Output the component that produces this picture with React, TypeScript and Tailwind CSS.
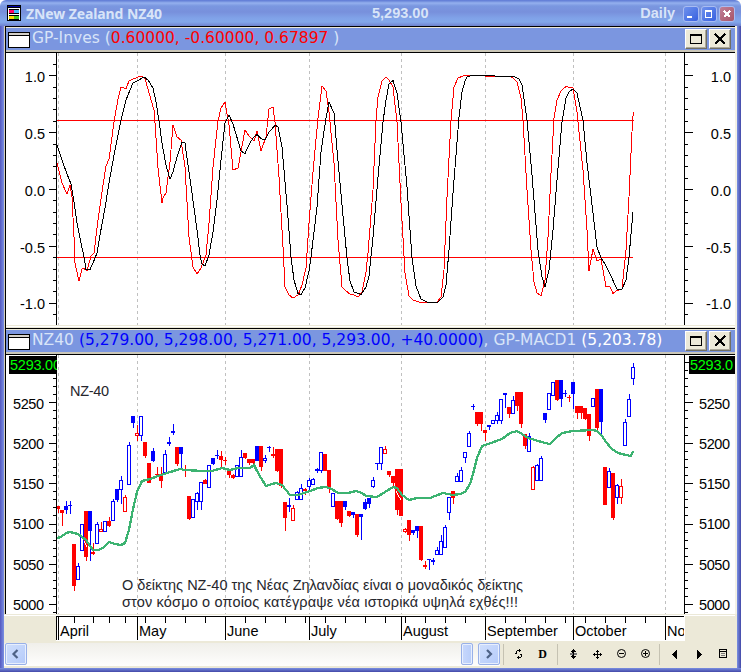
import React from "react";

type Candle = [number, number, number, number, number, string];

// x centre, high, low, body top, body bottom, kind (upper case = filled, lower case = hollow)
const candles: Candle[] = [
  [58, 506, 513, 506, 509, "R"], [62, 510, 526, 510, 513, "R"], [66, 501, 514, 506, 510, "B"], [70, 501, 514, 505, 506, "B"],
  [74, 544, 591, 544, 586, "R"], [78, 563, 580, 566, 580, "b"], [82, 524, 551, 524, 551, "b"], [86, 511, 561, 511, 557, "R"],
  [90, 511, 561, 511, 531, "B"], [93, 543, 555, 552, 554, "R"], [97, 522, 544, 524, 544, "b"], [101, 522, 532, 529, 532, "r"],
  [105, 521, 532, 521, 532, "b"], [109, 517, 527, 521, 526, "R"], [113, 499, 521, 501, 521, "b"], [117, 489, 502, 489, 500, "B"],
  [121, 476, 504, 480, 490, "b"], [125, 495, 512, 497, 512, "r"], [129, 442, 485, 445, 485, "b"], [133, 416, 428, 416, 423, "B"],
  [137, 425, 441, 433, 436, "r"], [141, 416, 441, 416, 436, "b"], [145, 442, 458, 442, 456, "R"], [149, 463, 483, 463, 483, "R"],
  [153, 448, 462, 451, 461, "B"], [157, 467, 476, 474, 475, "R"], [161, 467, 488, 474, 481, "R"], [165, 450, 473, 454, 473, "b"],
  [169, 437, 446, 442, 444, "B"], [173, 424, 435, 431, 433, "B"], [177, 447, 466, 447, 464, "R"], [181, 447, 468, 447, 454, "B"],
  [185, 465, 477, 470, 471, "R"], [189, 496, 520, 496, 519, "R"], [193, 499, 518, 499, 518, "b"], [197, 492, 510, 493, 502, "b"],
  [201, 482, 510, 482, 502, "b"], [205, 479, 484, 480, 484, "R"], [209, 465, 488, 465, 488, "b"], [213, 458, 465, 458, 464, "B"],
  [217, 450, 459, 455, 456, "B"], [221, 451, 467, 456, 460, "R"], [225, 457, 465, 460, 461, "R"], [229, 471, 478, 471, 475, "R"],
  [233, 474, 479, 475, 478, "R"], [237, 465, 477, 465, 477, "b"], [241, 450, 477, 457, 477, "b"], [245, 453, 459, 453, 458, "R"],
  [249, 459, 465, 459, 463, "R"], [253, 459, 464, 459, 463, "R"], [257, 446, 461, 446, 461, "B"], [261, 446, 471, 446, 467, "R"],
  [265, 455, 463, 458, 461, "b"], [269, 446, 452, 447, 448, "B"], [273, 447, 458, 454, 456, "R"], [277, 449, 472, 449, 471, "R"],
  [281, 449, 488, 449, 486, "R"], [285, 502, 531, 502, 518, "R"], [289, 498, 512, 505, 507, "B"], [293, 505, 521, 508, 521, "r"],
  [297, 491, 500, 492, 500, "b"], [301, 484, 500, 488, 500, "b"], [305, 488, 495, 489, 491, "R"], [309, 478, 490, 480, 487, "b"],
  [313, 478, 485, 479, 485, "b"], [317, 468, 473, 469, 471, "B"], [321, 452, 473, 452, 471, "b"], [325, 454, 471, 454, 471, "R"],
  [329, 470, 493, 470, 488, "R"], [333, 493, 507, 493, 507, "b"], [337, 501, 520, 501, 519, "R"], [341, 501, 527, 501, 523, "R"],
  [345, 501, 510, 501, 507, "B"], [349, 511, 517, 511, 516, "R"], [353, 512, 518, 512, 515, "B"], [357, 514, 537, 514, 535, "R"],
  [361, 514, 540, 514, 517, "B"], [365, 499, 510, 502, 509, "B"], [369, 498, 508, 498, 504, "B"], [373, 477, 488, 480, 487, "b"],
  [377, 463, 470, 463, 464, "B"], [381, 447, 470, 447, 464, "b"], [385, 446, 454, 449, 454, "r"], [389, 471, 477, 471, 475, "R"],
  [393, 476, 486, 476, 483, "R"], [397, 469, 515, 469, 510, "R"], [401, 469, 516, 469, 516, "R"], [405, 528, 533, 529, 532, "r"],
  [409, 520, 541, 520, 535, "R"], [413, 530, 535, 530, 533, "B"], [417, 526, 538, 526, 531, "B"], [421, 526, 561, 526, 560, "R"],
  [425, 561, 569, 565, 567, "R"], [429, 559, 570, 559, 560, "B"], [433, 558, 565, 560, 562, "B"], [437, 547, 555, 550, 555, "b"],
  [441, 535, 555, 541, 555, "b"], [445, 525, 548, 527, 548, "b"], [449, 497, 520, 497, 513, "b"], [453, 491, 504, 491, 498, "R"],
  [457, 473, 482, 476, 482, "b"], [461, 467, 482, 470, 482, "b"], [465, 452, 463, 452, 458, "b"], [469, 431, 447, 433, 447, "b"],
  [473, 404, 410, 406, 407, "B"], [477, 412, 426, 412, 424, "R"], [481, 412, 431, 412, 424, "R"], [485, 430, 441, 430, 433, "R"],
  [489, 425, 430, 425, 427, "B"], [493, 420, 424, 420, 424, "b"], [497, 412, 424, 415, 421, "b"], [501, 399, 424, 399, 421, "b"],
  [505, 393, 408, 393, 395, "B"], [509, 407, 418, 407, 414, "R"], [513, 396, 414, 400, 414, "b"], [517, 392, 411, 392, 406, "R"],
  [521, 392, 428, 392, 424, "R"], [525, 434, 449, 434, 446, "R"], [529, 433, 452, 436, 452, "b"], [533, 466, 490, 467, 490, "r"],
  [537, 464, 481, 465, 481, "b"], [541, 456, 481, 458, 481, "b"], [545, 413, 423, 413, 420, "B"], [549, 393, 410, 393, 410, "b"],
  [553, 382, 396, 382, 396, "b"], [557, 380, 401, 380, 400, "R"], [561, 380, 407, 380, 399, "B"], [565, 390, 397, 393, 394, "B"],
  [569, 395, 402, 397, 398, "R"], [573, 382, 409, 382, 394, "B"], [577, 406, 419, 406, 413, "R"], [581, 406, 419, 406, 413, "R"],
  [585, 408, 420, 408, 419, "R"], [589, 414, 441, 414, 436, "R"], [593, 398, 407, 398, 407, "b"], [597, 389, 430, 389, 428, "R"],
  [601, 389, 434, 389, 422, "B"], [605, 467, 505, 467, 505, "R"], [609, 468, 488, 471, 488, "b"], [613, 473, 520, 473, 518, "R"],
  [617, 484, 504, 485, 498, "b"], [621, 479, 504, 486, 498, "r"], [625, 419, 446, 422, 446, "b"], [629, 394, 417, 399, 417, "b"],
  [633, 363, 385, 367, 379, "b"],
];

const average =
  "57,538 61,537 66,533 70,532 78,534 86,540 90,546 93,550 99,550 104,547 109,542 115,544 121,545 125,543 129,530 133,509 137,492 142,481 150,479 158,476 167,473 180,469 185,470 203,471 212,471 222,468 230,470 238,468 250,468 254,465 257,471 261,478 266,486 272,484 276,483 282,485 290,495 298,495 310,491 318,488 325,487 330,488 338,493 348,493 356,491 362,493 366,496 377,497 385,492 393,487 397,488 402,495 409,500 417,498 430,498 443,493 453,495 460,494 465,492 470,484 473,474 477,458 482,446 488,444 502,439 510,433 517,431 522,434 528,438 535,440 545,443 550,444 555,439 562,433 573,431 593,430 597,431 602,436 606,442 612,449 618,453 626,455 631,456 633,451";

const signalLine =
  "57,145 60,154 63,163 67,174 71,184 74,202 77,223 81,243 84,257 86,269.5 90,269.5 93,263 97,253 100,235 105,208 109,183 115,150 121,120 126,100 130,90 133,83 138,80.5 144,77 148,80 153,88 156,102 159,121 162,143 166,165 170,179 173,172 177,157 182,142 185,143 187,158 192,193 197,230 200,255 202,264 205,266 209,255 213,232 217,200 221,160 225,123 229,115 233,124 241,151 245,153.5 250,143 253,138 257,134.5 261,138.5 265,140 269,132 275,125.5 278,126.5 282,147 287,205 291,257 294,280 298,293.5 301,294.5 305,288 309,271 311,257 317,207 321,152 326,118 329,102 334,113 337,150 342,205 347,258 350,281 354,292 361,294.5 366,287 369,276 373,237 378,177 383,122 386,100 389,84 393,80.5 397,93 401,122 407,187 412,258 416,286 421,299 427,302 438,302 443,297 446,285 449,250 453,193 459,117 462,92 465,81 467,77 471,75.5 491,75.5 502,77 507,76.5 515,77 519,79 522,85 527,120 532,175 538,250 542,277 545,287 549,270 553,230 557,180 562,122 566,98 569,92 573,89 577,93 583,120 587,163 593,213 597,247 601,258 605,264 610,274 617,289 622,289 626,280 629,257 633,212";

const fastLine =
  "57,163 62,183 67,194 70,185 72,197 74,237 75,263 79,281 82,269 84,268.5 87,271 91,256 94,253 98,220 102,192 106,166 109,159 114,122 118,99 121,87 126,88.5 129,81 133,79 141,76 145,78.5 149,93 154,110 155,123 158,168 162,203 163,198 166,193 170,162 173,125 177,137 181,140 185,167 189,237 193,267 197,274 201,268 206,255 209,223 213,167 218,121 221,108 225,102 229,125 233,170 238,168 241,152 245,130 249,136 254,141 257,131 261,151 266,137 269,109 273,107 275,122 279,177 283,247 285,287 289,295 293,298 298,295 302,285 306,268 309,223 313,172 318,118 322,86 326,91 329,112 334,163 338,240 342,287 346,291 350,294 354,295 358,297 362,292 366,272 368,253 373,190 376,120 378,97 382,81 386,77 389,80 393,87 397,122 401,203 405,273 409,296 413,300 421,302.5 437,302 441,297 444,270 447,197 451,120 454,87 458,78 463,76 470,75.5 484,75.5 487,76.5 498,77 510,76.5 513,78 517,82 521,98 523,120 527,190 531,250 534,282 537,293 541,295.5 545,280 548,237 551,173 554,118 557,100 561,91 566,86.5 573,88 577,112 583,170 587,230 589,271 593,249 597,261 601,259 606,286.5 610,287 613,293.5 617,290.5 622,289 626,250 629,197 632.5,121 633.5,112";

const months: [number, string][] = [
  [58, "April"], [137, "May"], [225, "June"], [309, "July"], [401, "August"], [485, "September"], [573, "October"], [665, "No"],
];

const weekTicks = [74, 93, 109, 125, 145, 165, 185, 205, 245, 265, 285, 305, 325, 345, 365, 385, 405, 425, 445, 465, 505, 525, 545, 565, 585, 605, 625, 645];

function GridLines({ top, bottom }: { top: number; bottom: number }) {
  return (
    <g stroke="#c0c0c0" strokeDasharray="3 3">
      {months.map(([x]) => (
        <line key={x} x1={x + 0.5} x2={x + 0.5} y1={top} y2={bottom} />
      ))}
    </g>
  );
}

function Axes({ top, bottom, zero, step, from, to }: { top: number; bottom: number; zero: number; step: number; from: number; to: number }) {
  const ticks: number[] = [];
  for (let i = from; i <= to; i++) ticks.push(i);
  return (
    <g fill="#000">
      <rect x={56} y={top} width={1} height={bottom - top} />
      <rect x={684} y={top} width={1} height={bottom - top} />
      {ticks.map((i) => {
        const y = Math.round(zero - i * step);
        const major = i % 5 === 0;
        return (
          <g key={i}>
            <rect x={major ? 49 : 53} y={y} width={major ? 7 : 3} height={1} />
            <rect x={685} y={y} width={major ? 8 : 3} height={1} />
          </g>
        );
      })}
    </g>
  );
}

function Oscillator() {
  const labels: [string, number][] = [["1.0", 82], ["0.5", 139], ["0.0", 196], ["-0.5", 253], ["-1.0", 309]];
  return (
    <svg className="block h-[272px] w-[729px] bg-white" viewBox="6 53 729 272" shapeRendering="crispEdges">
      <GridLines top={53} bottom={325} />
      <Axes top={53} bottom={325} zero={189} step={11.37} from={-11} to={11} />
      <g fill="#f00">
        <rect x={57} y={120} width={577} height={1} />
        <rect x={57} y={257} width={576} height={1} />
      </g>
      <polyline points={fastLine} fill="none" stroke="#f00" />
      <polyline points={signalLine} fill="none" stroke="#000" />
      <g className="font-['Liberation_Sans',Arial,sans-serif] text-[14.5px]" textAnchor="end">
        {labels.map(([t, y]) => (
          <React.Fragment key={t}>
            <text x={45} y={y}>{t}</text>
            <text x={731} y={y}>{t}</text>
          </React.Fragment>
        ))}
      </g>
    </svg>
  );
}

function CandleMark({ c }: { c: Candle }) {
  const [x, high, low, top, bottom, kind] = c;
  const colour = kind.toLowerCase() === "r" ? "#f00" : "#00f";
  const hollow = kind === "r" || kind === "b";
  return (
    <g fill={colour}>
      <rect x={x} y={high} width={1} height={low - high} />
      <rect x={x - 2} y={top} width={4} height={bottom - top} />
      {hollow && <rect x={x - 1} y={top + 1} width={2} height={Math.max(1, bottom - top - 2)} fill="#fff" />}
    </g>
  );
}

function PriceChart() {
  const labels: [string, number][] = [["5250", 409], ["5200", 449], ["5150", 489], ["5100", 529], ["5050", 570], ["5000", 610]];
  return (
    <svg className="block h-[259px] w-[729px] bg-white" viewBox="6 355 729 259" shapeRendering="crispEdges">
      <GridLines top={355} bottom={614} />
      <Axes top={355} bottom={614} zero={604.3} step={8.08} from={-1} to={30} />
      <clipPath id="plot"><rect x={57} y={355} width={627} height={259} /></clipPath>
      <g clipPath="url(#plot)">
        {candles.map((c) => <CandleMark key={c[0]} c={c} />)}
        <path d="M396 491l2 4M398 495l3 5M84 541l3 6" stroke="#fff" />
        <polyline points={average} fill="none" stroke="#3cb371" strokeWidth={2.3} />
      </g>
      <rect x={9} y={356} width={48} height={18} />
      <rect x={689} y={356} width={46} height={18} />
      <g className="font-['Liberation_Sans',Arial,sans-serif] text-[14.5px]">
        {labels.map(([t, y]) => (
          <React.Fragment key={t}>
            <text x={13} y={y} textLength={31}>{t}</text>
            <text x={699} y={y} textLength={31}>{t}</text>
          </React.Fragment>
        ))}
        <svg x={9} y={356} width={48} height={18}><text x={1} y={14} fill="#0f0" textLength={51}>5293.00</text></svg>
        <text x={690} y={370} fill="#0f0" textLength={43}>5293.0</text>
        <g fill="#26262c">
          <text x={70} y={396} textLength={39}>NZ-40</text>
          <text x={122} y={590} textLength={401}>Ο δείκτης NZ-40 της Νέας Ζηλανδίας είναι ο μοναδικός δείκτης</text>
          <text x={122} y={607} textLength={396}>στον κόσμο ο οποίος κατέγραψε νέα ιστορικά υψηλά εχθές!!!</text>
        </g>
      </g>
    </svg>
  );
}

function DateAxis() {
  return (
    <div className="h-[27px] bg-[#ece9d8]">
      <svg className="block h-[27px] w-[731px]" viewBox="4 614 731 27" shapeRendering="crispEdges">
        <rect x={4} y={614} width={731} height={1} fill="#ece9d8" />
        <rect x={4} y={615} width={731} height={1} fill="#fff" />
        <rect x={56} y={616} width={629} height={25} fill="#fff" />
        <rect x={56} y={616} width={628} height={1} />
        <rect x={56} y={616} width={1} height={24} />
        {weekTicks.map((x) => <rect key={x} x={x} y={617} width={1} height={6} />)}
        <svg x={57} y={616} width={627} height={25} viewBox="57 616 627 25">
          {months.map(([x, name]) => (
            <g key={name}>
              <rect x={x} y={616} width={1} height={24} />
              <text x={x + 2} y={636} className="font-['Liberation_Sans',Arial,sans-serif] text-[14.5px]">{name}</text>
            </g>
          ))}
        </svg>
      </svg>
    </div>
  );
}

function PanelButton({ children }: { children: React.ReactNode }) {
  return (
    <span className="block h-[20px] w-[22px] border border-b-[#716f64] border-l-white border-r-[#716f64] border-t-white bg-[#ece9d8] shadow-[inset_-1px_-1px_0_#aca899]">
      <svg className="block h-[18px] w-[20px]" viewBox="0 0 20 18" shapeRendering="crispEdges">{children}</svg>
    </span>
  );
}

function PanelHeader({ children }: { children: React.ReactNode }) {
  return (
    <div className="h-[27px] shrink-0 border-y border-black">
      <div className="flex h-[25px] items-center border-b-2 border-t border-b-[#cbc7b8] border-t-[#ece9d8] bg-[#7b96e0] pl-0.5 pr-1">
        <span className="mt-0.5 block h-4 w-[22px] shrink-0 border border-black bg-white">
          <span className="block h-[3px] border-b border-black bg-[#d4d0c8]" />
        </span>
        <div className="-mt-0.5 ml-0.5 grow whitespace-pre font-['DejaVu_Sans',Verdana,sans-serif] text-[15.5px] leading-[22px] text-[#d8e4f8]">{children}</div>
        <div className="flex gap-0.5">
          <PanelButton>
            <path d="M4.500 5v8.500h10.500V5z" fill="none" stroke="#000" />
            <path d="M4 4h12v2H4z" />
          </PanelButton>
          <PanelButton>
            <path d="M5 4l10 10M15 4L5 14" stroke="#000" strokeWidth="2" />
          </PanelButton>
        </div>
      </div>
    </div>
  );
}

function CaptionButton({ kind }: { kind: "min" | "max" | "close" }) {
  const colour = kind === "close" ? "bg-linear-to-br from-[#c08098] to-[#a85468]" : "bg-linear-to-br from-[#6f91ec] to-[#3860e0]";
  return (
    <span className={`block h-4 w-4 rounded-[3px] border border-[#a9bcf2] ${colour}`}>
      <svg className="block h-3.5 w-3.5" viewBox="0 0 14 14" fill="none" stroke="#fff" shapeRendering="crispEdges">
        {kind === "min" && <path d="M3 10h5" strokeWidth="2" />}
        {kind === "max" && <path d="M3.500 4v6.500h6V4M3 4h7" strokeWidth="1.500" />}
        {kind === "close" && <path d="M4 4l6 6M10 4l-6 6" strokeWidth="2" />}
      </svg>
    </span>
  );
}

function TitleBar() {
  return (
    <div className="flex h-[26px] shrink-0 items-center rounded-t-[6px] bg-[linear-gradient(#5f7ad6_0,#6c88da_1px,#94b0ee_3px,#7a97e0_6px,#7890dc_12px,#80a2e8_18px,#82a8ea_22px,#7a94de_24px,#6d82cc_26px)] pl-[7px] pr-1.5 text-[#d8e4f8]">
      <svg className="h-4 w-4" viewBox="0 0 16 16" shapeRendering="crispEdges">
        <path d="M0 0h14v16H0z" />
        <path d="M1 1h12v1H1z" fill="#00a" />
        <path d="M1 3h12v12H1z" fill="#fff" />
        <path d="M2 4h10v5H2zM2 10h10v5H2z" />
        <path d="M2 5h5v3H2z" fill="#f06" /><path d="M7 5h5v3H7z" fill="#4bf" />
        <path d="M2 11h5v3H2z" fill="#fd0" /><path d="M7 11h5v3H7z" fill="#4c2" />
      </svg>
      <div className="ml-[3px] mt-px w-[346px] whitespace-nowrap font-['Noto_Sans',Verdana,sans-serif] text-[14px] font-bold tracking-[-0.1px]">ZNew Zealand NZ40</div>
      <div className="mt-px grow font-['Liberation_Sans',Arial,sans-serif] text-[14.5px] font-bold">5,293.00</div>
      <div className="mr-[8px] mt-px font-['Liberation_Sans',Arial,sans-serif] text-[14.5px] font-bold">Daily</div>
      <div className="mt-0.5 flex gap-0.5">
        <CaptionButton kind="min" />
        <CaptionButton kind="max" />
        <CaptionButton kind="close" />
      </div>
    </div>
  );
}

function ToolIcon({ children }: { children: React.ReactNode }) {
  return (
    <svg className="mx-1 block h-4 w-4" viewBox="0 0 16 16" fill="none" stroke="#000" shapeRendering="crispEdges">{children}</svg>
  );
}

function Separator() {
  return <span className="h-[21px] w-px bg-[#c5c2b2]" />;
}

function ScrollButton({ path }: { path: string }) {
  return (
    <span className="block h-[22px] w-[22px] rounded-[2px] border border-[#98b0e8] bg-linear-to-br from-[#d0dffc] to-[#b4cafa] shadow-[inset_0_0_0_1px_#e8effd]">
      <svg className="block h-5 w-5" viewBox="0 0 20 20" fill="none" stroke="#4d6185" strokeWidth="2.200"><path d={path} /></svg>
    </span>
  );
}

function BottomBar() {
  return (
    <div className="flex h-[27px] items-start bg-[#ece9d8] pt-0.5">
      <div className="flex h-[23px] w-[496px] items-start bg-linear-to-b from-[#f0efea] to-[#fefefd] pl-px">
        <ScrollButton path="M11.500 6l-4 4 4 4" />
        <span className="ml-[434px] mr-[5px] block h-[22px] w-[12px] rounded-[2px] border border-[#98b0e8] bg-linear-to-r from-[#c8d8fc] to-[#b8cdfa] shadow-[inset_0_0_0_1px_#e8effd]" />
        <ScrollButton path="M8 6l4 4-4 4" />
      </div>
      <div className="flex h-[22px] items-center">
        <span className="w-[3px]" />
        <Separator />
        <div className="ml-[2px] mr-[3px] flex w-[48px] items-center">
          <ToolIcon>
            <g fill="#000" stroke="none">
              <path d="M6 5h1v3H6zM7 4h3v1H7zM9 3h1v3H9zM10 4h1v1h-1z" />
              <path d="M11 8h1v3h-1zM8 11h3v1H8zM8 10h1v3H8zM7 11h1v1H7zM5 7h1v1H5zM10 8h1v1h-1z" />
            </g>
          </ToolIcon>
          <span className="w-6 pl-px text-center font-['Liberation_Serif','Times_New_Roman',serif] text-[12px] font-bold leading-4">D</span>
        </div>
        <Separator />
        <div className="ml-[3px] mr-[2px] flex w-[96px]">
          <ToolIcon>
            <path d="M8 3h1v10H8zM7 4h3v2H7zM6 5h5v1H6zM7 10h3v2H7zM6 10h5v1H6zM7 6h2v4H7z" fill="#000" stroke="none" />
            <path d="M5 7.500h7M5 8.500h7" stroke="#777" />
            <path d="M8 5h1v6H8z" fill="#000" stroke="none" />
          </ToolIcon>
          <ToolIcon>
            <path d="M8 4h1v9H8zM4 8h9v1H4zM7 5h3v1H7zM7 11h3v1H7zM5 7h1v3H5zM11 7h1v3h-1z" fill="#000" stroke="none" />
          </ToolIcon>
          <ToolIcon><circle cx="8.500" cy="7.500" r="4" shapeRendering="auto" /><path d="M6 7.500h5" /></ToolIcon>
          <ToolIcon><circle cx="8.500" cy="7.500" r="4" shapeRendering="auto" /><path d="M6 7.500h5M8.500 5v5" /></ToolIcon>
        </div>
        <Separator />
        <div className="ml-[3px] flex">
          <ToolIcon><path d="M10 4v9L5 8.500z" fill="#000" stroke="none" /></ToolIcon>
          <ToolIcon><path d="M6 4v9l5-4.500z" fill="#000" stroke="none" /></ToolIcon>
          <ToolIcon><path d="M4.500 3.500h7v8h-7zM4 5.500h8" /><path d="M6 7.500h4M6 9.500h4" stroke="#777" /></ToolIcon>
        </div>
      </div>
    </div>
  );
}

export default function App() {
  return (
    <div className="flex h-[672px] w-[741px] flex-col overflow-hidden bg-white">
      <TitleBar />
      <div className="flex h-[642px] shrink-0">
        <div className="w-1 shrink-0 bg-linear-to-r from-[#5558c0] to-[#7b90e2]" />
        <div className="flex w-[733px] flex-col bg-[#ece9d8]">
          <div className="h-[588px] border-l border-r-2 border-l-[#d5d0bd] border-r-[#f3f1e6]">
            <div className="w-[730px] border-l border-black bg-white">
              <PanelHeader>
                GP-Inves (<span className="text-[#f00]">0.60000, -0.60000, 0.67897 </span>)
              </PanelHeader>
              <Oscillator />
              <div className="h-[3px] border-y border-[#ece9d8] bg-white" />
              <PanelHeader>
                NZ40 <span className="text-[#00f]">(5,279.00, 5,298.00, 5,271.00, 5,293.00, +40.0000)</span>, GP-MACD1 <span className="text-white">(5,203.78)</span>
              </PanelHeader>
              <PriceChart />
            </div>
          </div>
          <DateAxis />
          <BottomBar />
        </div>
        <div className="w-1 shrink-0 bg-linear-to-r from-[#7b90e2] to-[#4448a8]" />
      </div>
      <div className="h-1 shrink-0 bg-linear-to-b from-[#7b90e2] to-[#4448a8]" />
    </div>
  );
}
